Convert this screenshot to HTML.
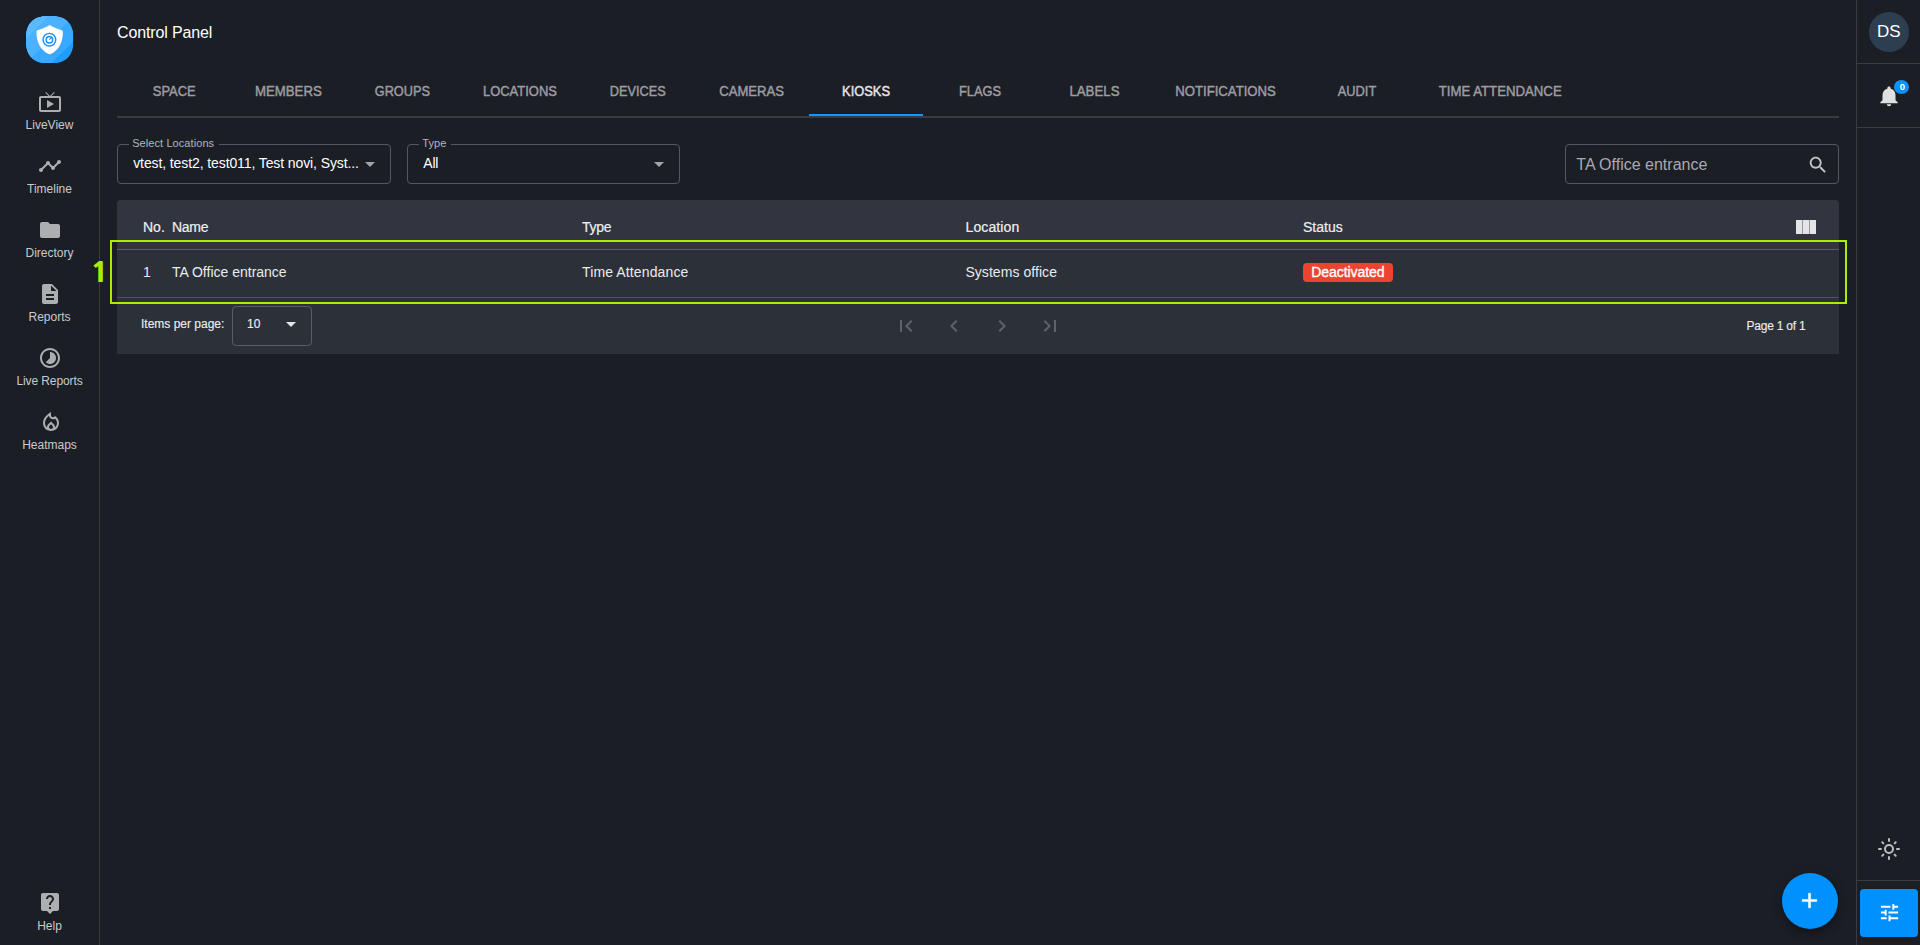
<!DOCTYPE html>
<html lang="en">
<head>
<meta charset="utf-8">
<title>Control Panel - Kiosks</title>
<style>
*{box-sizing:border-box;margin:0;padding:0}
html,body{width:1920px;height:945px;overflow:hidden;background:#1c1e26}
body{position:relative;font-family:"Liberation Sans",sans-serif;color:#fff}
.abs{position:absolute}
.t{position:absolute;white-space:nowrap;line-height:1}
.m{-webkit-text-stroke:0.35px currentColor}
.ico{position:absolute;display:block}
#lside{left:0;top:0;width:100px;height:945px;border-right:1px solid #393b41}
#rside{left:1856px;top:0;width:64px;height:945px;border-left:1px solid #393b41}
.hr{position:absolute;left:1857px;width:63px;height:1px;background:#393b41}
.nav{position:absolute;left:0;width:99px;text-align:center;font-size:12px;color:#c9cacc;line-height:1;white-space:nowrap}
.tab{position:absolute;top:66px;height:50px;line-height:50px;text-align:center;font-size:14px;color:#9c9da1;white-space:nowrap;-webkit-text-stroke:0.45px currentColor}
.tab.on{color:#e4e4e6}
.tab span{display:inline-block}
.field{position:absolute;top:144px;height:40px;border:1px solid #54575e;border-radius:4px}
.flabel{position:absolute;top:-9px;padding:0 5px 0 3.5px;letter-spacing:0.08px;background:#1c1e26;font-size:11px;color:#b4b5b9;line-height:14px;white-space:nowrap}
#card{left:117px;top:200px;width:1722px;height:154px;background:#2c3039;border-radius:4px 4px 0 0}
#thead{left:117px;top:200px;width:1722px;height:49px;background:#32353f;border-radius:4px 4px 0 0}
.line{position:absolute;left:117px;width:1722px;height:1px;background:#585b63}
.th{font-size:14px;color:#eeeef0;top:220px;-webkit-text-stroke:0.2px currentColor}
.td{font-size:14px;color:#ebebed;top:265px}
.pg{font-size:12px;color:#ebebed;-webkit-text-stroke:0.15px currentColor}
</style>
</head>
<body>
<!-- LEFT SIDEBAR -->
<div id="lside" class="abs"></div>
<svg class="ico" id="logo" style="left:26.3px;top:16.1px" width="47.4" height="47.4" viewBox="0 0 48 48">
<defs><clipPath id="sq"><path d="M48.00 24.00L47.93 27.54L47.71 30.08L47.36 32.31L46.86 34.35L46.22 36.21L45.44 37.94L44.52 39.52L43.47 40.97L42.29 42.29L40.97 43.47L39.52 44.52L37.94 45.44L36.21 46.22L34.35 46.86L32.31 47.36L30.08 47.71L27.54 47.93L24.00 48.00L20.46 47.93L17.92 47.71L15.69 47.36L13.65 46.86L11.79 46.22L10.06 45.44L8.48 44.52L7.03 43.47L5.71 42.29L4.53 40.97L3.48 39.52L2.56 37.94L1.78 36.21L1.14 34.35L0.64 32.31L0.29 30.08L0.07 27.54L0.00 24.00L0.07 20.46L0.29 17.92L0.64 15.69L1.14 13.65L1.78 11.79L2.56 10.06L3.48 8.48L4.53 7.03L5.71 5.71L7.03 4.53L8.48 3.48L10.06 2.56L11.79 1.78L13.65 1.14L15.69 0.64L17.92 0.29L20.46 0.07L24.00 0.00L27.54 0.07L30.08 0.29L32.31 0.64L34.35 1.14L36.21 1.78L37.94 2.56L39.52 3.48L40.97 4.53L42.29 5.71L43.47 7.03L44.52 8.48L45.44 10.06L46.22 11.79L46.86 13.65L47.36 15.69L47.71 17.92L47.93 20.46Z"/></clipPath></defs>
<g clip-path="url(#sq)">
<rect width="48" height="48" fill="#1f9dff"/>
<path d="M0 0H48V25.5L25.5 48H0Z" fill="#39a8ff"/>
<path d="M0 0H48V0L0 48Z" fill="#4cb1ff"/>
<path d="M0 0H23L0 23Z" fill="#5db9ff"/>
</g>
<path d="M24 9.2C20.2 11.6 15.6 13.4 12.2 14.2C11.2 14.5 10.7 15.2 10.7 16.2C10.5 26 14.5 34.5 23 38.6C23.7 38.95 24.3 38.95 25 38.6C33.5 34.5 37.5 26 37.3 16.2C37.3 15.2 36.8 14.5 35.8 14.2C32.4 13.4 27.8 11.6 24 9.2Z" fill="#fff"/>
<circle cx="23.7" cy="24" r="6.4" fill="none" stroke="#1a90fb" stroke-width="1.5"/>
<circle cx="23.7" cy="24" r="3.3" fill="none" stroke="#1a90fb" stroke-width="1.5"/>
<path d="M23.7 24L26 21.7" stroke="#1a90fb" stroke-width="1.2" fill="none"/>
</svg>
<svg class="ico" style="left:37.5px;top:90px" width="24" height="24" viewBox="0 0 24 24" fill="#adaeb1"><path d="M21 6h-7.59l3.29-3.29L16 2l-4 4-4-4-.71.71L10.59 6H3c-1.1 0-2 .89-2 2v12c0 1.1.9 2 2 2h18c1.1 0 2-.9 2-2V8c0-1.11-.9-2-2-2zm0 14H3V8h18v12zM9 10v8l7-4z"/></svg>
<div class="nav" id="n1" style="top:119px">LiveView</div>
<svg class="ico" style="left:37.5px;top:154px" width="24" height="24" viewBox="0 0 24 24" fill="#adaeb1"><path d="M23 8c0 1.1-.9 2-2 2-.18 0-.35-.02-.51-.07l-3.56 3.55c.05.16.07.34.07.52 0 1.1-.9 2-2 2s-2-.9-2-2c0-.18.02-.36.07-.52l-2.55-2.55c-.16.05-.34.07-.52.07s-.36-.02-.52-.07l-4.55 4.56c.05.16.07.33.07.51 0 1.1-.9 2-2 2s-2-.9-2-2 .9-2 2-2c.18 0 .35.02.51.07l4.56-4.55C8.02 9.36 8 9.18 8 9c0-1.1.9-2 2-2s2 .9 2 2c0 .18-.02.36-.07.52l2.55 2.55c.16-.05.34-.07.52-.07s.36.02.52.07l3.55-3.56C19.02 8.35 19 8.18 19 8c0-1.1.9-2 2-2s2 .9 2 2z"/></svg>
<div class="nav" id="n2" style="top:183px">Timeline</div>
<svg class="ico" style="left:37.5px;top:218px" width="24" height="24" viewBox="0 0 24 24" fill="#adaeb1"><path d="M10 4H4c-1.1 0-1.99.9-1.99 2L2 18c0 1.1.9 2 2 2h16c1.1 0 2-.9 2-2V8c0-1.1-.9-2-2-2h-8l-2-2z"/></svg>
<div class="nav" id="n3" style="top:247px">Directory</div>
<svg class="ico" style="left:37.5px;top:282px" width="24" height="24" viewBox="0 0 24 24" fill="#adaeb1"><path d="M14 2H6c-1.1 0-1.99.9-1.99 2L4 20c0 1.1.89 2 1.99 2H18c1.1 0 2-.9 2-2V8l-6-6zm2 16H8v-2h8v2zm0-4H8v-2h8v2zm-3-5V3.5L18.5 9H13z"/></svg>
<div class="nav" id="n4" style="top:311px">Reports</div>
<svg class="ico" style="left:37.5px;top:346px" width="24" height="24" viewBox="0 0 24 24" fill="#adaeb1"><path d="M16.24 7.76C15.07 6.59 13.54 6 12 6v6l-4.24 4.24c2.34 2.34 6.14 2.34 8.49 0 2.34-2.34 2.34-6.14-.01-8.48zM12 2C6.48 2 2 6.48 2 12s4.48 10 10 10 10-4.48 10-10S17.52 2 12 2zm0 18c-4.42 0-8-3.58-8-8s3.58-8 8-8 8 3.58 8 8-3.58 8-8 8z"/></svg>
<div class="nav" id="n5" style="top:375px;letter-spacing:-0.1px">Live Reports</div>
<svg class="ico" style="left:39px;top:410px" width="24" height="24" viewBox="0 0 24 24" fill="#adaeb1"><path d="M16 6l-.44.55C14.38 8.02 12 7.19 12 5.3V2S4 6 4 13c0 4.42 3.58 8 8 8s8-3.58 8-8c0-2.96-1.61-5.62-4-7zm-4 13c-1.1 0-2-.87-2-1.94 0-.51.2-.99.58-1.36l1.420-1.4 1.430 1.4c.37.37.57.85.57 1.36 0 1.07-.9 1.940-2 1.940zm3.960-1.5c.04-.36.22-1.890-1.130-3.220L12 11.500l-2.830 2.780C7.810 15.620 8 17.160 8.040 17.500 6.790 16.400 6 14.790 6 13c0-3.160 2.130-5.650 4.030-7.250.23 1.990 1.930 3.550 3.990 3.550.78 0 1.540-.23 2.180-.64C17.330 9.830 18 11.370 18 13c0 1.790-.79 3.400-2.040 4.500z"/></svg>
<div class="nav" id="n6" style="top:439px">Heatmaps</div>
<svg class="ico" style="left:37.5px;top:891px" width="24" height="24" viewBox="0 0 24 24" fill="#adaeb1"><path d="M19 2H5c-1.11 0-2 .9-2 2v14c0 1.1.89 2 2 2h4l3 3 3-3h4c1.1 0 2-.9 2-2V4c0-1.1-.9-2-2-2zm-6 16h-2v-2h2v2zm2.07-7.75l-.9.92C13.45 11.9 13 12.5 13 14h-2v-.5c0-1.1.45-2.1 1.17-2.83l1.24-1.26c.37-.36.59-.86.59-1.41 0-1.1-.9-2-2-2s-2 .9-2 2H8c0-2.21 1.79-4 4-4s4 1.79 4 4c0 .88-.36 1.68-.93 2.25z"/></svg>
<div class="nav" id="n7" style="top:920px">Help</div>

<!-- RIGHT SIDEBAR -->
<div id="rside" class="abs"></div>
<div class="abs" style="left:1869px;top:12px;width:40px;height:40px;border-radius:50%;background:#2c3e50"></div>
<div class="t" id="ds" style="left:1877px;top:23px;font-size:17px">DS</div>
<div class="hr" style="top:63px"></div>
<svg class="ico" style="left:1876px;top:84px" width="26" height="24.4" viewBox="0 0 24 24" preserveAspectRatio="none" fill="#e0e0e1"><path d="M12 22c1.1 0 2-.9 2-2h-4c0 1.1.89 2 2 2zm6-6v-5c0-3.07-1.64-5.64-4.5-6.32V4c0-.83-.67-1.5-1.5-1.5s-1.5.67-1.5 1.5v.68C7.63 5.36 6 7.92 6 11v5l-2 2v1h16v-1l-2-2z"/></svg>
<div class="abs" style="left:1894px;top:79.8px;width:15.2px;height:14.4px;border-radius:50%;background:#0a93fd"></div>
<div class="t" id="bz" style="left:1899.7px;top:82px;font-size:9.5px;font-weight:bold">0</div>
<div class="hr" style="top:127px"></div>
<svg class="ico" style="left:1877px;top:837px" width="24" height="24" viewBox="0 0 24 24" fill="none" stroke="#bdbec1" stroke-width="2" stroke-linecap="round"><circle cx="12" cy="12" r="4"/><path d="M12 2v2M12 20v2M2 12h2M20 12h2M5.3 5.3l1.05 1.05M17.65 17.65l1.05 1.05M18.7 5.3l-1.05 1.05M6.35 17.65l-1.05 1.05"/></svg>
<div class="hr" style="top:880px"></div>
<div class="abs" style="left:1860px;top:889px;width:58px;height:48px;border-radius:4px;background:#0091ff"></div>
<svg class="ico" style="left:1877.6px;top:901px" width="23" height="23" viewBox="0 0 24 24" fill="#fff"><path d="M3 17v2h6v-2H3zM3 5v2h10V5H3zm10 16v-2h8v-2h-8v-2h-2v6h2zM7 9v2H3v2h4v2h2V9H7zm14 4v-2H11v2h10zm-6-4h2V7h4V5h-4V3h-2v6z"/></svg>

<!-- HEADER -->
<div class="t" id="title" style="left:117px;top:25px;font-size:16px;letter-spacing:-0.13px">Control Panel</div>

<!-- TABS -->
<div class="abs" style="left:117px;top:116px;width:1722px;height:2px;background:#393b41"></div>
<div class="tab" style="left:117px;width:114px"><span id="tb1" style="transform:scaleX(0.924)">SPACE</span></div>
<div class="tab" style="left:231px;width:114px"><span id="tb2" style="transform:scaleX(0.943)">MEMBERS</span></div>
<div class="tab" style="left:345px;width:114px"><span id="tb3" style="transform:scaleX(0.907)">GROUPS</span></div>
<div class="tab" style="left:459px;width:122px"><span id="tb4" style="transform:scaleX(0.925)">LOCATIONS</span></div>
<div class="tab" style="left:581px;width:114px"><span id="tb5" style="transform:scaleX(0.907)">DEVICES</span></div>
<div class="tab" style="left:695px;width:114px"><span id="tb6" style="transform:scaleX(0.935)">CAMERAS</span></div>
<div class="tab on" style="left:809px;width:114px"><span id="tb7" style="transform:scaleX(0.919)">KIOSKS</span></div>
<div class="tab" style="left:923px;width:114px"><span id="tb8" style="transform:scaleX(0.917)">FLAGS</span></div>
<div class="tab" style="left:1037px;width:114px"><span id="tb9" style="transform:scaleX(0.948)">LABELS</span></div>
<div class="tab" style="left:1151.8px;width:148px"><span id="tb10" style="transform:scaleX(0.939)">NOTIFICATIONS</span></div>
<div class="tab" style="left:1299.8px;width:114px"><span id="tb11" style="transform:scaleX(0.916)">AUDIT</span></div>
<div class="tab" style="left:1413px;width:174px"><span id="tb12" style="transform:scaleX(0.943)">TIME ATTENDANCE</span></div>
<div class="abs" style="left:809px;top:114px;width:114px;height:2px;background:#1395fb"></div>

<!-- FILTERS -->
<div class="field" style="left:117px;width:274px"><span class="flabel" id="fl1" style="left:10.7px">Select Locations</span></div>
<div class="t" id="fv1" style="left:133.2px;top:156px;font-size:14px;letter-spacing:-0.1px">vtest, test2, test011, Test novi, Syst...</div>
<svg class="ico" style="left:358px;top:152px" width="24" height="24" viewBox="0 0 24 24" fill="#a3a4a8"><path d="M7 10l5 5 5-5z"/></svg>
<div class="field" style="left:407px;width:273px"><span class="flabel" id="fl2" style="left:10.7px">Type</span></div>
<div class="t" id="fv2" style="left:423.3px;top:156px;font-size:14px;letter-spacing:-0.2px">All</div>
<svg class="ico" style="left:647px;top:152px" width="24" height="24" viewBox="0 0 24 24" fill="#a3a4a8"><path d="M7 10l5 5 5-5z"/></svg>
<div class="field" style="left:1565px;width:274px"></div>
<div class="t" id="sv" style="left:1576.3px;top:157px;font-size:16px;color:#a9aaae">TA Office entrance</div>
<svg class="ico" style="left:1807px;top:154px" width="22" height="22" viewBox="0 0 24 24" fill="#c3c4c7"><path d="M15.5 14h-.79l-.28-.27C15.41 12.59 16 11.11 16 9.5 16 5.91 13.09 3 9.5 3S3 5.91 3 9.5 5.91 16 9.5 16c1.61 0 3.09-.59 4.23-1.57l.27.28v.79l5 4.99L20.49 19l-4.99-5zm-6 0C7.01 14 5 11.99 5 9.5S7.01 5 9.5 5 14 7.01 14 9.5 11.99 14 9.5 14z"/></svg>

<!-- TABLE -->
<div id="card" class="abs"></div>
<div id="thead" class="abs"></div>
<div class="line" style="top:249px;background:#5c5f67"></div>
<div class="line" style="top:297px;background:#4f535b"></div>
<div class="t th" id="h1" style="left:143px">No.</div>
<div class="t th" id="h2" style="left:172px;letter-spacing:-0.3px">Name</div>
<div class="t th" id="h3" style="left:582px;letter-spacing:-0.3px">Type</div>
<div class="t th" id="h4" style="left:965.5px;letter-spacing:0.12px">Location</div>
<div class="t th" id="h5" style="left:1303px">Status</div>
<svg class="ico" style="left:1796px;top:220px" width="20" height="14" viewBox="0 0 20 14"><rect width="20" height="14" fill="#e5e5e7"/><rect x="6.1" width="0.9" height="14" fill="#8f9096"/><rect x="13.1" width="0.9" height="14" fill="#8f9096"/></svg>
<div class="t td" id="d1" style="left:143px">1</div>
<div class="t td" id="d2" style="left:172px">TA Office entrance</div>
<div class="t td" id="d3" style="left:582px;letter-spacing:0.13px">Time Attendance</div>
<div class="t td" id="d4" style="left:965.4px;letter-spacing:0.06px">Systems office</div>
<div class="abs" style="left:1303px;top:263px;width:90px;height:19px;border-radius:4px;background:#ed4331"></div>
<div class="t td m" id="d5" style="left:1311.3px;top:265px;color:#fff;letter-spacing:-0.08px">Deactivated</div>

<!-- PAGINATION -->
<div class="t pg" id="p1" style="left:141px;top:318px">Items per page:</div>
<div class="abs" style="left:232px;top:306px;width:80px;height:40px;border:1px solid #5a5d65;border-radius:4px"></div>
<div class="t pg" id="p2" style="left:247px;top:318px">10</div>
<svg class="ico" style="left:279px;top:312px" width="24" height="24" viewBox="0 0 24 24" fill="#e4e4e6"><path d="M7 10l5 5 5-5z"/></svg>
<svg class="ico" style="left:894px;top:314px" width="24" height="24" viewBox="0 0 24 24" fill="#5f626a"><path d="M18.41 16.59L13.82 12l4.59-4.59L17 6l-6 6 6 6zM6 6h2v12H6z"/></svg>
<svg class="ico" style="left:942px;top:314px" width="24" height="24" viewBox="0 0 24 24" fill="#5f626a"><path d="M15.41 7.41L14 6l-6 6 6 6 1.41-1.41L10.83 12z"/></svg>
<svg class="ico" style="left:990px;top:314px" width="24" height="24" viewBox="0 0 24 24" fill="#5f626a"><path d="M10 6L8.59 7.41 13.17 12l-4.58 4.59L10 18l6-6z"/></svg>
<svg class="ico" style="left:1038px;top:314px" width="24" height="24" viewBox="0 0 24 24" fill="#5f626a"><path d="M5.59 7.41L10.18 12l-4.59 4.59L7 18l6-6-6-6zM16 6h2v12h-2z"/></svg>
<div class="t pg" id="p3" style="left:1746.5px;top:320px;letter-spacing:-0.22px">Page 1 of 1</div>

<!-- HIGHLIGHT -->
<div class="abs" id="hl" style="left:110px;top:240px;width:1737px;height:64px;border:2px solid #abec00"></div>
<div class="t" id="one" style="left:89.7px;top:259px;font-size:27px;font-weight:800;color:#abec00;font-family:NanumGothic,'Liberation Sans',sans-serif;transform:scaleX(1.2);transform-origin:0 0">1</div>

<!-- FAB -->
<div class="abs" style="left:1782px;top:873px;width:56px;height:56px;border-radius:50%;background:#0091ff;box-shadow:0 3px 5px -1px rgba(0,0,0,.2),0 5px 8px 0 rgba(0,0,0,.13),0 1px 14px 0 rgba(0,0,0,.1)"></div>
<svg class="ico" style="left:1797.4px;top:888.4px" width="25" height="25" viewBox="0 0 24 24" fill="#fff" stroke="#fff" stroke-width="0.5"><path d="M19 13h-6v6h-2v-6H5v-2h6V5h2v6h6v2z"/></svg>
</body>
</html>
